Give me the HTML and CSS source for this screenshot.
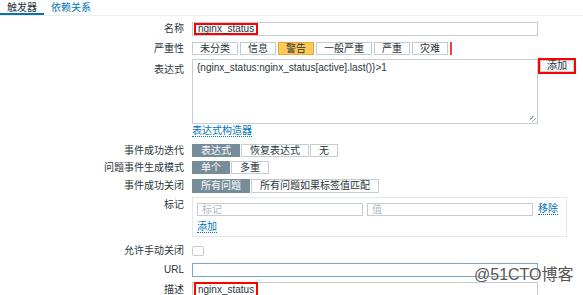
FILE: index.html
```html
<!DOCTYPE html>
<html lang="zh">
<head>
  <meta charset="UTF-8" />
  <title>触发器</title>
  <link rel="stylesheet" href="styles.css">
</head>
<body>
  <!-- 标签页 -->
  <div class="tabs">
    <span class="tab active">触发器</span>
    <span class="tab">依赖关系</span>
  </div>

  <div class="form">
    <div class="row mt6">
      <label>名称</label>
      <div class="input"><span class="mark">nginx_status</span></div>
    </div>

    <div class="row mt6">
      <label>严重性</label>
      <div class="seg sev">
        <span class="btn">未分类</span>
        <span class="btn">信息</span>
        <span class="btn warn">警告</span>
        <span class="btn">一般严重</span>
        <span class="btn">严重</span>
        <span class="btn">灾难</span>
        <span class="redbar"></span>
      </div>
    </div>

    <div class="row top mt4">
      <label>表达式</label>
      <div class="textarea expr">{nginx_status:nginx_status[active].last()}&gt;1</div>
      <span class="add-wrap"><span class="add-btn">添加</span></span>
    </div>

    <div class="row mt2">
      <label></label>
      <a class="link">表达式构造器</a>
    </div>

    <div class="row mt7">
      <label>事件成功迭代</label>
      <div class="seg">
        <span class="btn on">表达式</span>
        <span class="btn">恢复表达式</span>
        <span class="btn">无</span>
      </div>
    </div>

    <div class="row mt4">
      <label>问题事件生成模式</label>
      <div class="seg">
        <span class="btn on">单个</span>
        <span class="btn">多重</span>
      </div>
    </div>

    <div class="row mt5">
      <label>事件成功关闭</label>
      <div class="seg tall">
        <span class="btn on">所有问题</span>
        <span class="btn">所有问题如果标签值匹配</span>
      </div>
    </div>

    <div class="row top mt4">
      <label class="tag-label">标记</label>
      <div class="tags">
        <div class="tag-line">
          <div class="small-input">标记</div>
          <div class="small-input">值</div>
          <a class="link">移除</a>
        </div>
        <a class="link">添加</a>
      </div>
    </div>

    <div class="row mt8">
      <label>允许手动关闭</label>
      <span class="checkbox"></span>
    </div>

    <div class="row mt6">
      <label>URL</label>
      <div class="input focus"></div>
    </div>

    <div class="row top mt5">
      <label class="desc-label">描述</label>
      <div class="textarea desc"><span class="mark">nginx_status</span></div>
    </div>
  </div>

  <div class="watermark">@51CTO博客</div>
</body>
</html>
```

FILE: styles.css
```css
* { box-sizing: border-box; }
body {
  margin: 0;
  font-family: "Liberation Sans", "Noto Sans CJK SC", sans-serif;
  font-size: 10px;
  color: #2a363c;
  background: #fff;
  overflow: hidden;
}
.tabs {
  display: flex;
  border-bottom: 1px solid #ebeef0;
}
.tab {
  padding: 2px 7px 0;
  line-height: 11px;
  border-bottom: 2px solid transparent;
  color: #0275b8;
}
.tab.active {
  color: #2a363c;
  border-bottom-color: #0275b8;
}
.row {
  display: flex;
  align-items: center;
}
.row.top { align-items: flex-start; }
.row label {
  flex: 0 0 192px;
  padding-right: 8px;
  text-align: right;
  line-height: 12px;
}
.mt2 { margin-top: 2px; }
.mt4 { margin-top: 4px; }
.mt5 { margin-top: 5px; }
.mt6 { margin-top: 6px; }
.mt7 { margin-top: 7px; }
.mt8 { margin-top: 8px; }

.input {
  width: 346px;
  height: 14px;
  border: 1px solid #c3cdd2;
  padding: 0 1px;
  display: flex;
  align-items: center;
}
.input.focus { border-color: #7ba6c4; }
.mark {
  border: 2px solid #f00;
  line-height: 8px;
  padding: 0 2px;
  white-space: nowrap;
}

.seg {
  display: flex;
  gap: 1px;
}
.seg.sev { gap: 2px; align-items: stretch; }
.btn {
  height: 13px;
  line-height: 11px;
  padding: 0 8px;
  border: 1px solid #c3cdd2;
  background: #fff;
  white-space: nowrap;
}
.seg.sev .btn { padding: 0 7px; }
.seg.tall .btn { height: 14px; line-height: 12px; }
.btn.warn {
  background: #ffc859;
  border-color: #e8a93a;
}
.btn.on {
  background: #768d99;
  border-color: #768d99;
  color: #fff;
}
.redbar {
  width: 2px;
  background: #f04040;
}

.textarea {
  width: 346px;
  border: 1px solid #c3cdd2;
  position: relative;
}
.expr {
  height: 65px;
  padding: 2px 4px;
  line-height: 12px;
}
.expr::after {
  content: "";
  position: absolute;
  right: 1px;
  bottom: 1px;
  width: 6px;
  height: 6px;
  background: repeating-linear-gradient(135deg, transparent 0 2px, #9aa7ad 2px 3px);
}
.row.top > label { padding-top: 5px; }
.add-wrap {
  margin-top: -1px;
  border: 2px solid #f00;
}
.add-btn {
  display: block;
  height: 12px;
  line-height: 10px;
  padding: 0 6px;
  border: 1px solid #c3cdd2;
  background: #f3f5f6;
}

.link {
  color: #0275b8;
  line-height: 10px;
  border-bottom: 1px dotted #0275b8;
}

.tags {
  width: 375px;
  height: 40px;
  border: 1px solid #e3e8ea;
  padding: 5px 4px 0;
}
.row.top > .tag-label { padding-top: 2px; }
.tag-line {
  display: flex;
  align-items: center;
  gap: 4px;
  margin-bottom: 5px;
}
.small-input {
  width: 166px;
  height: 13px;
  border: 1px solid #c3cdd2;
  padding: 0 4px;
  line-height: 11px;
  color: #acbbc2;
}
.tag-line .link { margin-left: 1px; }

.checkbox {
  width: 12px;
  height: 10px;
  border: 1px solid #c3cdd2;
  border-radius: 2px;
}

.desc {
  height: 15px;
  padding: 1px 1px;
}
.row.top > .desc-label { padding-top: 2px; }

.watermark {
  position: absolute;
  left: 474px;
  top: 266px;
  font-size: 16px;
  line-height: 18px;
  color: #555;
  text-shadow: 0 0 2px #fff;
}
```
